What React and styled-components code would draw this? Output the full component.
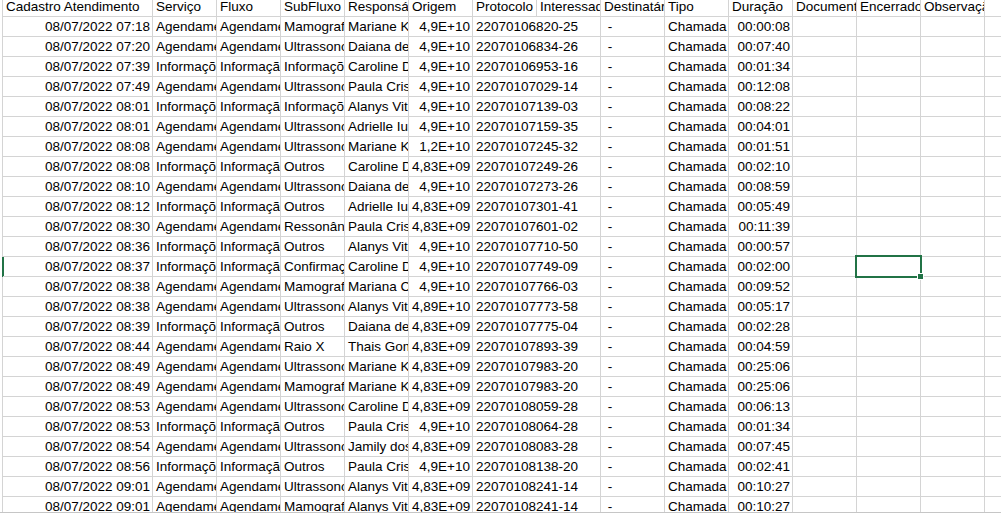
import React from "react";
import styled, { createGlobalStyle } from "styled-components";

const GlobalStyle = createGlobalStyle`
  html, body { margin: 0; padding: 0; background: #fff; overflow: hidden; }
  #root { width: 1001px; height: 515px; }
`;

const GRID = "#d4d4d4";
const GREEN = "#217346";

const Sheet = styled.div`
  width: 1001px;
  height: 515px;
  display: flex;
  flex-direction: column;
  background: #fff;
  font-family: "Liberation Sans", Arial, sans-serif;
  font-size: 13.5px;
  color: #000;
`;

const Viewport = styled.div`
  height: 512px;
  overflow: hidden;
  flex: none;
`;

const Grid = styled.div`
  margin-top: -3px;
  display: flex;
  flex-direction: column;
`;

const Row = styled.div`
  display: flex;
  height: 20px;
  flex: none;
`;

const RowHead = styled.div`
  width: 3px;
  flex: none;
  box-sizing: border-box;
  border-right: 1px solid ${(p) => (p.$active ? GREEN : GRID)};
  box-shadow: ${(p) => (p.$active ? `1px 0 0 ${GREEN}` : "none")};
`;

const Cell = styled.div`
  position: relative;
  width: ${(p) => p.$w}px;
  flex: ${(p) => (p.$grow ? "1 0 auto" : "none")};
  box-sizing: border-box;
  height: 20px;
  border-right: 1px solid ${GRID};
  border-bottom: 1px solid ${GRID};
  padding: 0 2px 0 3px;
  line-height: 19px;
  white-space: pre;
  overflow: ${(p) => (p.$selected ? "visible" : "hidden")};
  text-align: ${(p) => (p.$right ? "right" : "left")};
`;

const Selection = styled.div`
  position: absolute;
  z-index: 2;
  left: -2px;
  top: -2px;
  width: 67px;
  height: 23px;
  box-sizing: border-box;
  border: 2px solid ${GREEN};
`;

const FillHandle = styled.div`
  position: absolute;
  right: -4px;
  bottom: -4px;
  width: 7px;
  height: 7px;
  box-sizing: border-box;
  background: ${GREEN};
  border: 1px solid #fff;
`;

const BottomEdge = styled.div`
  flex: 1;
  border-top: 1px solid #c6c6c6;
  background: #fff;
`;

const headers = [
  "Cadastro Atendimento",
  "Serviço",
  "Fluxo",
  "SubFluxo",
  "Responsável",
  "Origem",
  "Protocolo",
  "Interessado",
  "Destinatário",
  "Tipo",
  "Duração",
  "Documento",
  "Encerrado",
  "Observação",
];

const AG = "Agendamento";
const INF_S = "Informações";
const INF_F = "Informação";

const rows = [
  ["08/07/2022 07:18", AG, AG, "Mamografia", "Mariane Kelly", "4,9E+10", "22070106820-25", "00:00:08"],
  ["08/07/2022 07:20", AG, AG, "Ultrassonografia", "Daiana de Souza", "4,9E+10", "22070106834-26", "00:07:40"],
  ["08/07/2022 07:39", INF_S, INF_F, "Informações", "Caroline Dias", "4,9E+10", "22070106953-16", "00:01:34"],
  ["08/07/2022 07:49", AG, AG, "Ultrassonografia", "Paula Cristina", "4,9E+10", "22070107029-14", "00:12:08"],
  ["08/07/2022 08:01", INF_S, INF_F, "Informações", "Alanys Vitória", "4,9E+10", "22070107139-03", "00:08:22"],
  ["08/07/2022 08:01", AG, AG, "Ultrassonografia", "Adrielle Iung", "4,9E+10", "22070107159-35", "00:04:01"],
  ["08/07/2022 08:08", AG, AG, "Ultrassonografia", "Mariane Kelly", "1,2E+10", "22070107245-32", "00:01:51"],
  ["08/07/2022 08:08", INF_S, INF_F, "Outros", "Caroline Dias", "4,83E+09", "22070107249-26", "00:02:10"],
  ["08/07/2022 08:10", AG, AG, "Ultrassonografia", "Daiana de Souza", "4,9E+10", "22070107273-26", "00:08:59"],
  ["08/07/2022 08:12", INF_S, INF_F, "Outros", "Adrielle Iung", "4,83E+09", "22070107301-41", "00:05:49"],
  ["08/07/2022 08:30", AG, AG, "Ressonância", "Paula Cristina", "4,83E+09", "22070107601-02", "00:11:39"],
  ["08/07/2022 08:36", INF_S, INF_F, "Outros", "Alanys Vitória", "4,9E+10", "22070107710-50", "00:00:57"],
  ["08/07/2022 08:37", INF_S, INF_F, "Confirmação", "Caroline Dias", "4,9E+10", "22070107749-09", "00:02:00"],
  ["08/07/2022 08:38", AG, AG, "Mamografia", "Mariana Costa", "4,9E+10", "22070107766-03", "00:09:52"],
  ["08/07/2022 08:38", AG, AG, "Ultrassonografia", "Alanys Vitória", "4,89E+10", "22070107773-58", "00:05:17"],
  ["08/07/2022 08:39", INF_S, INF_F, "Outros", "Daiana de Souza", "4,83E+09", "22070107775-04", "00:02:28"],
  ["08/07/2022 08:44", AG, AG, "Raio X", "Thais Gomes", "4,83E+09", "22070107893-39", "00:04:59"],
  ["08/07/2022 08:49", AG, AG, "Ultrassonografia", "Mariane Kelly", "4,83E+09", "22070107983-20", "00:25:06"],
  ["08/07/2022 08:49", AG, AG, "Mamografia", "Mariane Kelly", "4,83E+09", "22070107983-20", "00:25:06"],
  ["08/07/2022 08:53", AG, AG, "Ultrassonografia", "Caroline Dias", "4,83E+09", "22070108059-28", "00:06:13"],
  ["08/07/2022 08:53", INF_S, INF_F, "Outros", "Paula Cristina", "4,9E+10", "22070108064-28", "00:01:34"],
  ["08/07/2022 08:54", AG, AG, "Ultrassonografia", "Jamily dos Santos", "4,83E+09", "22070108083-28", "00:07:45"],
  ["08/07/2022 08:56", INF_S, INF_F, "Outros", "Paula Cristina", "4,9E+10", "22070108138-20", "00:02:41"],
  ["08/07/2022 09:01", AG, AG, "Ultrassonografia", "Alanys Vitória", "4,83E+09", "22070108241-14", "00:10:27"],
  ["08/07/2022 09:01", AG, AG, "Mamografia", "Alanys Vitória", "4,83E+09", "22070108241-14", "00:10:27"],
];

const SELECTED_ROW = 12;

function HeaderRow() {
  return (
    <Row>
      <RowHead />
      {headers.map((h, i) => (
        <Cell key={h} $w={i === 0 ? 150 : 64}>
          {h}
        </Cell>
      ))}
      <Cell $w={17} $grow />
    </Row>
  );
}

function DataRow({ r, active }) {
  const [date, serv, flux, sub, resp, orig, prot, dur] = r;
  return (
    <Row>
      <RowHead $active={active} />
      <Cell $w={150} $right>{date}</Cell>
      <Cell $w={64}>{serv}</Cell>
      <Cell $w={64}>{flux}</Cell>
      <Cell $w={64}>{sub}</Cell>
      <Cell $w={64}>{resp}</Cell>
      <Cell $w={64} $right>{orig}</Cell>
      <Cell $w={128}>{prot}</Cell>
      <Cell $w={64}>{" -"}</Cell>
      <Cell $w={64}>Chamada</Cell>
      <Cell $w={64} $right>{dur}</Cell>
      <Cell $w={64} />
      <Cell $w={64} $selected={active}>
        {active && (
          <Selection>
            <FillHandle />
          </Selection>
        )}
      </Cell>
      <Cell $w={64} />
      <Cell $w={17} $grow />
    </Row>
  );
}

export default function App() {
  return (
    <>
      <GlobalStyle />
      <Sheet>
        <Viewport>
          <Grid>
            <HeaderRow />
            {rows.map((r, i) => (
              <DataRow key={i} r={r} active={i === SELECTED_ROW} />
            ))}
          </Grid>
        </Viewport>
        <BottomEdge />
      </Sheet>
    </>
  );
}
